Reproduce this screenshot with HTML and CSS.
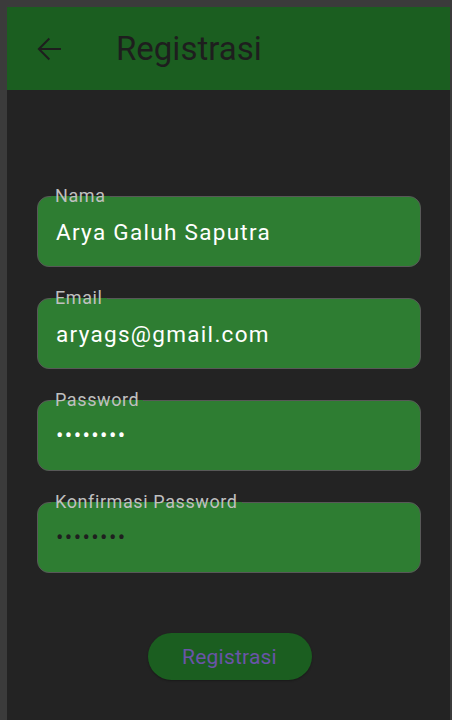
FILE: index.html
```
<!DOCTYPE html>
<html>
<head>
<meta charset="utf-8">
<link rel="stylesheet" href="styles.css">
</head>
<body>
<div class="frame">
  <div class="screen">
    <header class="appbar">
      <svg class="back" width="36" height="36" viewBox="0 0 24 24"><path d="M20 11.3H6.9l5.8-5.8-0.95-0.95L4.3 12l7.45 7.45 0.95-0.95-5.8-5.8H20v-1.4z" fill="#1e1e1e"/></svg>
      <h1 class="title">Registrasi</h1>
    </header>
    <main class="form">
      <div class="field"><span class="label">Nama</span><span class="value">Arya Galuh Saputra</span></div>
      <div class="field"><span class="label">Email</span><span class="value">aryags@gmail.com</span></div>
      <div class="field"><span class="label">Password</span><span class="value dots">••••••••</span></div>
      <div class="field"><span class="label">Konfirmasi Password</span><span class="value dots dark">••••••••</span></div>
      <div class="actions"><button class="btn">Registrasi</button></div>
    </main>
  </div>
</div>
</body>
</html>
```
FILE: styles.css
```
html, body {
  margin: 0;
  padding: 0;
  background: #3b3b3b;
  font-family: Roboto, "Noto Sans", sans-serif;
}
.frame {
  padding: 7px 2px 0 7px;
  height: 720px;
  box-sizing: border-box;
}
.screen {
  background: #232323;
  height: 713px;
  display: flex;
  flex-direction: column;
}
.appbar {
  height: 83px;
  background: #1b5e20;
  display: flex;
  align-items: center;
  padding-left: 24px;
}
.back {
  width: 36px;
  height: 36px;
  flex: none;
}
.title {
  margin: 0 0 0 49px;
  font-weight: 400;
  font-size: 33px;
  color: #1e1e1e;
  letter-spacing: 0;
}
.form {
  padding: 106px 29px 0 30px;
  display: flex;
  flex-direction: column;
  gap: 31px;
}
.field {
  position: relative;
  height: 71px;
  box-sizing: border-box;
  border: 1px solid #585858;
  border-radius: 12px;
  background: #2e7d32;
  display: flex;
  align-items: center;
  padding-left: 18px;
}
.label {
  position: absolute;
  left: 13px;
  top: -11px;
  padding: 0 4px;
  line-height: 20px;
  font-size: 18px;
  letter-spacing: 0.6px;
  color: #c0c0c0;
  background: linear-gradient(to bottom, transparent 10px, #2e7d32 10px);
}
.value {
  font-size: 22.5px;
  letter-spacing: 1.3px;
  color: #ffffff;
}
.dots {
  font-size: 22px;
  letter-spacing: 1.4px;
}
.dark {
  color: #1f1f1f;
}
.actions {
  display: flex;
  justify-content: center;
  padding-top: 29px;
  padding-left: 1px;
}
.btn {
  width: 164px;
  height: 47px;
  border: none;
  border-radius: 24px;
  background: #1b5e20;
  color: #6a54a8;
  font-family: Roboto, sans-serif;
  font-size: 21px;
  letter-spacing: 0.2px;
  box-shadow: 0 1px 2px rgba(0,0,0,0.3);
}
```
